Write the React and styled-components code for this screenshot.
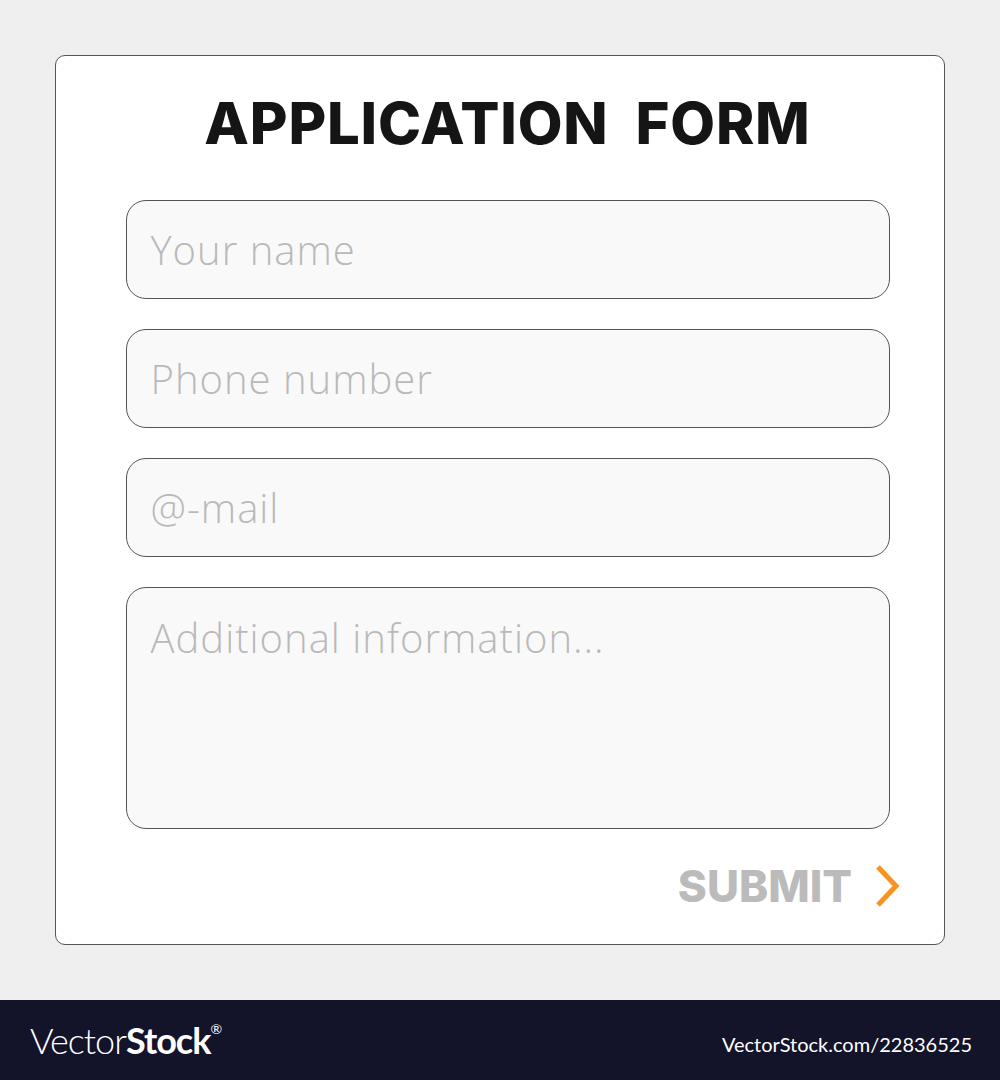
import styled, { createGlobalStyle } from "styled-components";

const Global = createGlobalStyle`
    body{
        margin: 0;
        background: #efefef;
        font-family: "Lato", "Liberation Sans", sans-serif;
    }
`

export default function App(){
    return(
        <Page>
            <Global/>
            <Stage>
                <Card>
                    <Title>APPLICATION&nbsp;&nbsp;FORM</Title>
                    <Fields>
                        <Field><Placeholder>Your name</Placeholder></Field>
                        <Field><Placeholder>Phone number</Placeholder></Field>
                        <Field><Placeholder>@-mail</Placeholder></Field>
                        <Field tall><Placeholder>Additional information...</Placeholder></Field>
                    </Fields>
                    <SubmitRow>
                        <Submit>SUBMIT</Submit>
                        <svg width="28" height="44" viewBox="0 0 28 44">
                            <path d="M4 3 L22 22 L4 41" fill="none" stroke="#f7931e" strokeWidth="5" />
                        </svg>
                    </SubmitRow>
                </Card>
            </Stage>
            <Footer>
                <Logo>Vector<b>Stock</b><sup>®</sup></Logo>
                <FooterLink>VectorStock.com/22836525</FooterLink>
            </Footer>
        </Page>
    )
}

const Page = styled.div`
    width: 1000px;
    height: 1080px;
    display: flex;
    flex-direction: column;
`
const Stage = styled.div`
    height: 1000px;
    padding: 55px;
    box-sizing: border-box;
`
const Card = styled.div`
    height: 890px;
    box-sizing: border-box;
    background: #fff;
    border: 1px solid #555;
    border-radius: 10px;
    padding-left: 15px;
    display: flex;
    flex-direction: column;
    align-items: center;
`
const Title = styled.h1`
    margin: 30px 0px 0px 0px;
    font-family: "Inter", "Liberation Sans", sans-serif;
    font-weight: 800;
    font-size: 58px;
    line-height: 74px;
    letter-spacing: 0.8px;
    color: #151515;
`
const Fields = styled.div`
    width: 764px;
    margin-top: 40px;
    display: flex;
    flex-direction: column;
    gap: 30px;
`
const Field = styled.div`
    height: ${p => p.tall ? "242px" : "99px"};
    box-sizing: border-box;
    background: #f9f9f9;
    border: 1px solid #555;
    border-radius: 20px;
    padding: ${p => p.tall ? "22px 24px" : "0px 24px"};
    display: flex;
    align-items: ${p => p.tall ? "flex-start" : "center"};
`
const Placeholder = styled.span`
    font-family: "Open Sans", sans-serif;
    font-weight: 300;
    font-size: 40px;
    letter-spacing: 1px;
    color: #b9b9b9;
`
const SubmitRow = styled.div`
    align-self: flex-end;
    margin: 30px 42px 0px 0px;
    display: flex;
    align-items: center;
    gap: 22px;
`
const Submit = styled.span`
    font-family: "Inter", "Liberation Sans", sans-serif;
    font-weight: 800;
    font-size: 44px;
    color: #bbbbbb;
`
const Footer = styled.div`
    height: 80px;
    background: #13142a;
    display: flex;
    align-items: center;
    justify-content: space-between;
    padding: 0px 28px 0px 30px;
    color: #fff;
`
const Logo = styled.div`
    font-family: "Lato", sans-serif;
    font-weight: 300;
    font-size: 36px;
    letter-spacing: -1px;

    b{
        font-weight: 700;
    }

    sup{
        font-size: 14px;
        font-weight: 400;
        vertical-align: 20px;
    }
`
const FooterLink = styled.div`
    font-family: "Lato", sans-serif;
    font-size: 20px;
    padding-top: 8px;
`
